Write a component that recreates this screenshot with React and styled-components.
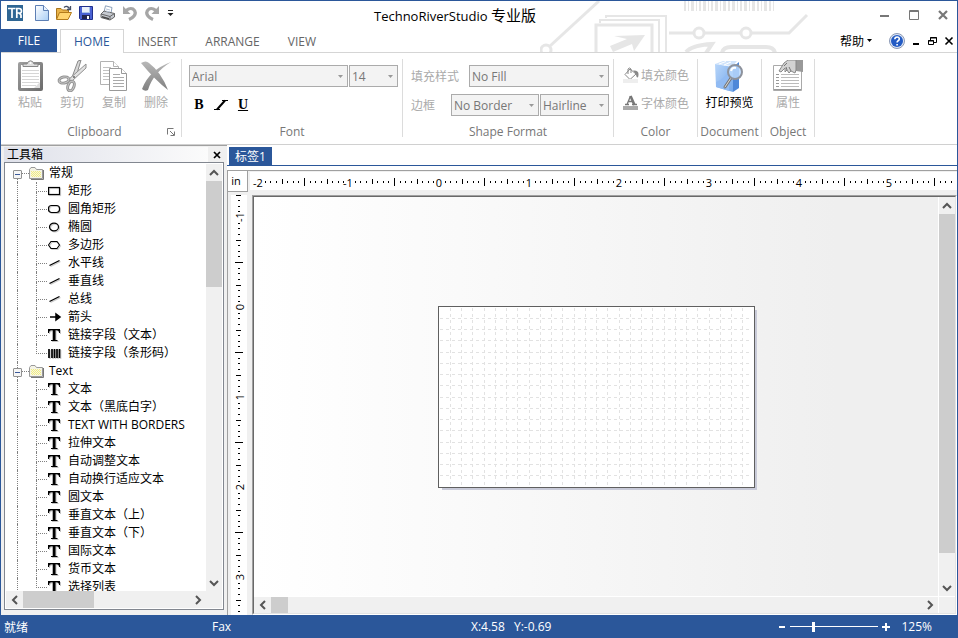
import { useState } from "react"
import styled, { createGlobalStyle } from "styled-components"

const blue = "#2b579a"
const face = "#f0f0f0"

const GlobalStyle = createGlobalStyle`
    * {
        box-sizing: border-box;
    }
    body {
        margin: 0;
    }
    body, button, select, input {
        font-family: "Open Sans", "Noto Sans CJK SC", sans-serif;
        font-size: 12px;
    }
    button {
        padding: 0;
        border: none;
        background: transparent;
        color: inherit;
    }
    svg {
        display: block;
        flex: none;
    }
`

const Window = styled.div`
    height: 100vh;
    display: flex;
    flex-direction: column;
    background-color: white;
    border: 1px solid ${blue};
    border-bottom: none;
    overflow: hidden;
`

/* ---------- header ---------- */

const Header = styled.header`
    position: relative;
    flex: none;
`
const Backdrop = styled.svg`
    position: absolute;
    top: 0;
    right: 147px;
`
const TitleBar = styled.div`
    position: relative;
    height: 28px;
    display: grid;
    grid-template-columns: 174px 1fr 222px;
    align-items: center;
`
const QuickAccess = styled.div`
    display: flex;
    align-items: center;
    gap: 6px;
    padding: 0 0 4px 6px;
`
const QuickButton = styled.button`
    width: ${props => props.$narrow ? "10px" : "16px"};
    height: 16px;
    margin-left: ${props => props.$first ? "5px" : "0"};
`
const Title = styled.h1`
    margin: 0;
    font-size: 13px;
    font-weight: 400;
    line-height: 24px;
    text-align: center;
    color: black;
    white-space: nowrap;
`
const Edition = styled.span`
    font-size: 15px;
`
const Controls = styled.div`
    display: flex;
    justify-content: flex-end;
    gap: 17px;
    padding-right: 8px;
`
const TabRow = styled.nav`
    position: relative;
    height: 24px;
    display: flex;
    border-bottom: 1px solid #d5d5d5;
`
const FileTab = styled.button`
    width: 56px;
    height: 23px;
    margin-right: 3px;
    background-color: ${blue};
    color: white;
`
const Tab = styled.button`
    height: 24px;
    padding: 0 13px;
    border: 1px solid ${props => props.$active ? "#d5d5d5" : "transparent"};
    border-bottom: none;
    background-color: ${props => props.$active ? "white" : "transparent"};
    color: ${props => props.$active ? blue : "#666"};
`
const HelpArea = styled.div`
    margin-left: auto;
    display: flex;
    align-items: center;
    gap: 7px;
    padding-right: 3px;
`
const HelpMenu = styled.button`
    display: flex;
    align-items: center;
    gap: 2px;
    margin-right: 9px;
    color: black;
`

/* ---------- ribbon ---------- */

const Ribbon = styled.div`
    flex: none;
    height: 92px;
    display: flex;
    padding: 6px 0 7px;
    border-bottom: 1px solid #d0d0d0;
`
const Group = styled.section`
    width: ${props => props.$width}px;
    display: flex;
    flex-direction: column;
    justify-content: space-between;
    border-right: 1px solid #dcdcdc;
`
const GroupFooter = styled.div`
    display: flex;
    padding: ${props => props.$launcher ? "0 5px 0 21px" : "0"};
`
const GroupTitle = styled.h2`
    flex: 1;
    margin: 0;
    font-size: 12px;
    font-weight: 400;
    line-height: 10px;
    text-align: center;
    color: #777;
`
const BigRow = styled.div`
    display: flex;
    justify-content: center;
    padding: 1px 0 0;
`
const ClipboardRow = styled(BigRow)`
    justify-content: flex-start;
    padding-left: 8px;
`
const BigButton = styled.button`
    min-width: 42px;
    display: flex;
    flex-direction: column;
    align-items: center;
    line-height: 22px;
    white-space: nowrap;
    color: black;
    &:disabled {
        color: #aaa;
    }
`
const Fields = styled.div`
    display: flex;
    flex-direction: column;
    gap: 7px;
    padding: 6px 4px 0 ${props => props.$indent}px;
`
const FieldRow = styled.div`
    display: flex;
    align-items: center;
    gap: 1px;
    height: 22px;
`
const FieldLabel = styled.label`
    flex: 1;
    color: #aaa;
`
const SelectWrap = styled.span`
    position: relative;
    display: block;
    width: ${props => props.$width}px;
    svg {
        position: absolute;
        right: 4px;
        top: 10px;
    }
`
const Select = styled.select`
    appearance: none;
    display: block;
    width: 100%;
    height: 22px;
    padding: 0 2px;
    border: 1px solid #ababab;
    border-radius: 0;
    background-color: #f3f3f3;
    color: #777;
    opacity: 1;
`
const StyleButtons = styled.div`
    display: flex;
    gap: 2px;
`
const StyleButton = styled.button`
    width: 20px;
    height: 22px;
    display: flex;
    align-items: center;
    justify-content: center;
    font-family: "Liberation Serif", serif;
    font-size: 14px;
    font-weight: 700;
    color: black;
    text-decoration: ${props => props.$underline ? "underline" : "none"};
`
const ColorList = styled.div`
    display: flex;
    flex-direction: column;
    gap: 8px;
    padding: 6px 0 0 9px;
`
const ColorButton = styled.button`
    display: flex;
    align-items: center;
    gap: 2px;
    height: 20px;
    color: #aaa;
    white-space: nowrap;
`

/* ---------- toolbox ---------- */

const Workspace = styled.main`
    flex: 1;
    min-height: 0;
    display: flex;
`
const Dock = styled.aside`
    width: 226px;
    display: flex;
    flex-direction: column;
    padding: 1px 3px 5px;
    border-top: 1px solid #a0a0a0;
    background-color: ${face};
`
const DockHeader = styled.div`
    height: 15px;
    display: flex;
    align-items: center;
    justify-content: space-between;
    padding: 0 3px;
    background: linear-gradient(90deg, #dfe1ea, #fbfbfb 204px, ${face} 204px);
`
const DockTitle = styled.h2`
    margin: 0;
    font-size: 12px;
    font-weight: 400;
    line-height: 15px;
`
const TreeBox = styled.div`
    flex: 1;
    min-height: 0;
    display: grid;
    grid-template-columns: 1fr 16px;
    grid-template-rows: 1fr 17px;
    padding: 1px;
    border: 1px solid #828790;
    background-color: white;
`
const Tree = styled.ul`
    margin: 0;
    padding: 0;
    list-style: none;
    overflow: hidden;
`
const Branch = styled.ul`
    margin: 0;
    padding: 0;
    list-style: none;
`
const TreeRow = styled.div`
    height: 18px;
    display: flex;
    align-items: center;
    white-space: nowrap;
    line-height: 18px;
`
const ToggleCell = styled.span`
    width: 9px;
    height: 18px;
    margin-left: 7px;
    display: flex;
    flex-direction: column;
    align-items: center;
    justify-content: flex-end;
`
const Toggle = styled.button`
    width: 9px;
    height: 9px;
    display: flex;
    align-items: center;
    justify-content: center;
    border: 1px solid #919191;
    border-radius: 1px;
    background-color: #f6f6f6;
`
const Stub = styled.span`
    width: 1px;
    flex: ${props => props.$top ? "1" : "none"};
    height: 3px;
    border-left: 1px dotted ${props => props.$hidden ? "transparent" : "#808080"};
`
const Dots = styled.span`
    width: 7px;
    border-top: 1px dotted #808080;
`
const FolderName = styled.span`
    margin-left: 5px;
`
const Guide = styled.span`
    width: 19px;
    height: 18px;
    margin-left: 11px;
    border-left: 1px dotted #808080;
`
const Elbow = styled.span`
    width: 11px;
    height: 18px;
    margin-right: 1px;
`
const ElbowHalf = styled.span`
    display: block;
    height: ${props => props.$top ? "10px" : "8px"};
    border-left: 1px dotted ${props => props.$hidden ? "transparent" : "#808080"};
    border-bottom: ${props => props.$top ? "1px dotted #808080" : "none"};
`
const ItemName = styled.span`
    margin-left: 6px;
`

/* ---------- scroll bars ---------- */

const VBar = styled.div`
    display: flex;
    flex-direction: column;
    background-color: ${face};
`
const HBar = styled.div`
    display: flex;
    background-color: ${face};
`
const BarButton = styled.button`
    min-width: 16px;
    min-height: 16px;
    flex: 0 0 17px;
    display: flex;
    align-items: center;
    justify-content: center;
`
const BarTrack = styled.div`
    flex: 1;
    display: flex;
    flex-direction: ${props => props.$vertical ? "column" : "row"};
`
const Thumb = styled.div`
    flex: none;
    background-color: #cdcdcd;
`
const BarCorner = styled.div`
    background-color: ${face};
`

/* ---------- document ---------- */

const DocArea = styled.section`
    flex: 1;
    min-width: 0;
    display: flex;
    flex-direction: column;
`
const DocTabs = styled.div`
    height: 21px;
    display: flex;
    align-items: flex-start;
    padding: 2px 0 0 2px;
    border-bottom: 1px solid ${blue};
`
const DocTab = styled.button`
    height: 18px;
    padding: 0 6px;
    background-color: ${blue};
    color: white;
`
const DocFrame = styled.div`
    flex: 1;
    min-height: 0;
    margin-top: 4px;
    display: grid;
    grid-template-columns: 24px 1fr;
    grid-template-rows: 24px 1fr;
    border-top: 1px solid #a0a0a0;
    border-left: 1px solid #a0a0a0;
    background-color: ${face};
`
const Unit = styled.div`
    width: 20px;
    height: 21px;
    padding-right: 3px;
    border-right: 1px solid #a0a0a0;
    border-bottom: 1px solid #a0a0a0;
    background-color: white;
    font-size: 11px;
    line-height: 20px;
    text-align: center;
`
const TopRuler = styled.div`
    height: 18px;
    margin: 1px 0 0 -2px;
    background-color: white;
    overflow: hidden;
`
const SideRuler = styled.div`
    width: 16px;
    min-height: 0;
    margin-left: 3px;
    background-color: white;
    overflow: hidden;
`
const ScaleText = styled.text`
    font-size: 11px;
    text-anchor: middle;
    stroke: white;
    stroke-width: 2px;
    paint-order: stroke;
`
const Sunken = styled.div`
    min-width: 0;
    min-height: 0;
    border: 1px solid;
    border-color: #a0a0a0 white white #a0a0a0;
`
const View = styled.div`
    height: 100%;
    display: grid;
    grid-template-columns: 1fr 16px;
    grid-template-rows: 1fr 16px;
    gap: 1px;
    border: 1px solid;
    border-color: #696969 #e3e3e3 #e3e3e3 #696969;
    background-color: white;
`
const Canvas = styled.div`
    padding: 109px 0 0 184px;
    background: linear-gradient(90deg, white, #fafafa 30%, #efefef 85%);
    overflow: hidden;
`
const Sheet = styled.div`
    width: 317px;
    height: 182px;
    border: 1px solid #5f5f5f;
    background-color: white;
    box-shadow: 3px 3px 0 -1px #c8cad8;
`

/* ---------- status bar ---------- */

const StatusBar = styled.footer`
    flex: none;
    height: 23px;
    margin: 0 -1px;
    display: flex;
    align-items: center;
    padding: 0 26px 0 4px;
    background-color: ${blue};
    color: white;
    white-space: nowrap;
`
const StatusText = styled.span`
    width: ${props => props.$width}px;
`
const ZoomBox = styled.div`
    margin-left: auto;
    display: flex;
    align-items: center;
    gap: 4px;
`
const ZoomRange = styled.input`
    appearance: none;
    width: 88px;
    height: 12px;
    margin: 0;
    background: linear-gradient(white, white) center / 100% 1px no-repeat;
    &::-webkit-slider-thumb {
        appearance: none;
        width: 3px;
        height: 10px;
        background-color: white;
    }
`
const ZoomValue = styled.output`
    margin-left: 7px;
`

/* ---------- drawings ---------- */

const barWidths = [2, 1, 3, 1, 2, 4, 1, 2, 3, 1, 3, 2, 4, 1, 2, 3, 1, 3, 2, 1, 3, 2, 1, 2, 3, 2]

const HeaderArt = () => {
    let x = 144
    return (
        <Backdrop width="270" height="51" viewBox="0 0 270 51" fill="none" stroke="#e6e6e6" strokeWidth="3" aria-hidden="true">
            <circle cx="6" cy="49" r="5" />
            <path d="M10 45 59 0" />
            <path d="M56 52V24H112V52" />
            <path d="M60 22V19H119V52" strokeWidth="2" />
            <path d="M66 17V15H126V52" strokeWidth="2" />
            <path d="M70 45 87 38 74 35 105 34 94 50 92 43 73 51Z" fill="#e6e6e6" stroke="none" />
            <path d="M129 32H153M165 32H200M212 32H249L267 14" />
            <circle cx="159" cy="32" r="5" />
            <circle cx="206" cy="32" r="5" />
            <path d="M146 51Q152 44 172 43L166 52M182 52Q183 46 191 46H226Q234 46 235 52" strokeWidth="4" />
            {barWidths.map((w, i) => {
                const bar = <rect key={i} x={x} y="0" width={w > 2 ? 3 : w} height="10" fill="#e6e6e6" stroke="none" />
                x += w > 2 ? 5 : w + 2
                return x < 238 ? bar : null
            })}
        </Backdrop>
    )
}

const Logo = () => (
    <svg width="16" height="16" viewBox="0 0 16 16">
        <rect width="16" height="16" fill="#2f6694" />
        <path d="M1 3.500H8.500M5 3.500V13M9.800 13V3.500H12Q14.500 3.500 14.500 6T12 8H10M12 8L14 10V13" fill="none" stroke="white" strokeWidth="1.700" />
    </svg>
)
const NewIcon = () => (
    <svg width="16" height="16" viewBox="0 0 16 16">
        <defs>
            <linearGradient id="paper" x2="1" y2="1">
                <stop stopColor="#fff" />
                <stop offset="1" stopColor="#a9cef5" />
            </linearGradient>
        </defs>
        <path d="M1.500 .5H9.500L14.500 5.500V15.500H1.500Z" fill="url(#paper)" stroke="#5d7fb4" />
        <path d="M9.500 .5V5.500H14.500" fill="#e8f3ff" stroke="#5d7fb4" />
    </svg>
)
const OpenIcon = () => (
    <svg width="16" height="16" viewBox="0 0 16 16">
        <path d="M.5 14V3.500H5L6.500 5H12.500V9" fill="#e9b44a" stroke="#a8741c" />
        <path d="M.5 14.500 3.500 7.500H15.500L12 14.500Z" fill="#ffd570" stroke="#b37b1b" />
        <path d="M8 2.500Q11 0 13.500 3.500M14.500 1V4.500H11" fill="none" stroke="#444f66" strokeWidth="1.300" />
    </svg>
)
const SaveIcon = () => (
    <svg width="16" height="16" viewBox="0 0 16 16">
        <path d="M1.500 1.500H14.500V14.500H2.500L1.500 13.500Z" fill="#4a62d3" stroke="#20308c" />
        <rect x="4" y="2" width="8" height="6" fill="#e9f0fb" />
        <path d="M11 2H12V8H4V7H11Z" fill="#a9c2ea" />
        <rect x="4" y="10" width="8" height="4" fill="#22264f" />
        <rect x="9" y="11" width="2" height="3" fill="#fff" />
    </svg>
)
const PrintIcon = () => (
    <svg width="16" height="16" viewBox="0 0 16 16">
        <path d="M4 7 5.500.8 12 2.500 11 8" fill="#fff" stroke="#8ba0ba" />
        <path d="M1 9 4 6 14.500 8.500V12L10 15 1 12.500Z" fill="#c6cad1" stroke="#666" />
        <path d="M1 9 10 11.500 14.500 8.500M10 11.500V15" fill="none" stroke="#666" />
        <path d="M2 11 9 13V14.500L2 12.500Z" fill="#444" />
        <path d="M6 4 10 5M6 6 10 7" stroke="#b7c6da" />
    </svg>
)
const UndoIcon = ({ redo }) => (
    <svg width="16" height="16" viewBox="0 0 16 16">
        <g transform={redo ? "translate(16 0) scale(-1 1)" : undefined} fill="none">
            <path d="M4 5.500Q8 2.500 11 4 15 7 12 11 10.500 13 7 14.500" stroke="#a6a6a6" strokeWidth="3.200" />
            <path d="M1 1V9H8.500Z" fill="#a6a6a6" />
        </g>
    </svg>
)
const MoreIcon = () => (
    <svg width="10" height="16" viewBox="0 0 10 16">
        <path d="M2 5.500H7" stroke="#222" />
        <path d="M1.500 8H7.500L4.500 11Z" fill="#222" />
    </svg>
)
const MinimizeIcon = () => (
    <svg width="12" height="12" viewBox="0 0 12 12"><path d="M1 7H10" stroke="#777" strokeWidth="2" /></svg>
)
const MaximizeIcon = () => (
    <svg width="12" height="12" viewBox="0 0 12 12" fill="none" stroke="#777">
        <path d="M1.500 1.500H10.500V10.500H1.500Z" />
        <path d="M1 2.500H11" />
    </svg>
)
const CloseIcon = () => (
    <svg width="12" height="12" viewBox="0 0 12 12"><path d="M2 2 10 10M10 2 2 10" stroke="#777" strokeWidth="2.200" /></svg>
)
const CaretIcon = ({ color }) => (
    <svg width="7" height="4" viewBox="0 0 7 4"><path d="M1 0H6L3.500 3Z" fill={color} /></svg>
)
const HelpIcon = () => (
    <svg width="16" height="16" viewBox="0 0 16 16">
        <circle cx="8" cy="8" r="7.500" fill="#dfe7f5" stroke="#8b99b5" />
        <circle cx="8" cy="8" r="6" fill="#235bc4" />
        <path d="M5.800 6.300Q5.900 4 8.100 4T10.300 6.100Q10.300 7.200 8.900 8 8.100 8.500 8.100 9.500M8.100 11V12.500" fill="none" stroke="#fff" strokeWidth="1.600" />
    </svg>
)
const ChildMinIcon = () => (
    <svg width="9" height="10" viewBox="0 0 9 10"><path d="M1 8H7" stroke="black" strokeWidth="2" /></svg>
)
const ChildRestoreIcon = () => (
    <svg width="9" height="10" viewBox="0 0 9 10" fill="none" stroke="black">
        <path d="M2.500 4V1.500H8.500V6.500H6M2 2H9" />
        <path d="M.5 4.500H5.500V8.500H.5ZM0 5H6" />
    </svg>
)
const ChildCloseIcon = () => (
    <svg width="10" height="10" viewBox="0 0 10 10"><path d="M1.500 1.500 8.500 8.500M8.500 1.500 1.500 8.500" stroke="black" strokeWidth="1.600" /></svg>
)

const PasteIcon = () => (
    <svg width="32" height="32" viewBox="0 0 32 32">
        <defs>
            <linearGradient id="board" x2="1" y2="1">
                <stop stopColor="#a0a0a0" />
                <stop offset="1" stopColor="#6a6a6a" />
            </linearGradient>
        </defs>
        <rect x="4" y="2" width="25" height="29" rx="2" fill="url(#board)" />
        <rect x="7" y="5" width="19" height="23" fill="#fff" />
        <path d="M26 22V28H20Z" fill="#ddd" />
        <path d="M8 10.500H25M8 13.500H25M8 16.500H25M8 19.500H25M8 22.500H25M8 25.500H22" stroke="#d6d6d6" />
        <path d="M9 6.500V4H13Q14 .8 16.500 .8T20 4H24V6.500Z" fill="#dedede" stroke="#888" />
        <circle cx="16.500" cy="3" r="1" fill="#fff" />
    </svg>
)
const CutIcon = () => (
    <svg width="32" height="32" viewBox="0 0 32 32" fill="none">
        <path d="M22 1 25 0 20 17 15 20Z" fill="#d9d9d9" stroke="#8a8a8a" />
        <path d="M30 4 30 8 16 21 12 20Z" fill="#e2e2e2" stroke="#909090" />
        <ellipse cx="8" cy="20" rx="5" ry="3" transform="rotate(-12 8 20)" stroke="#929292" strokeWidth="3" />
        <ellipse cx="15" cy="26" rx="3" ry="5" transform="rotate(20 15 26)" stroke="#929292" strokeWidth="3" />
        <ellipse cx="8" cy="20" rx="5" ry="3" transform="rotate(-12 8 20)" stroke="#c9c9c9" />
        <ellipse cx="15" cy="26" rx="3" ry="5" transform="rotate(20 15 26)" stroke="#c9c9c9" />
        <circle cx="18" cy="17" r="1" fill="#666" />
    </svg>
)
const CopyIcon = () => (
    <svg width="32" height="32" viewBox="0 0 32 32" fill="#fff" stroke="#b2b2b2">
        <path d="M2.500 1.500H15.500L20.500 6.500V24.500H2.500Z" />
        <path d="M15.500 1.500V6.500H20.500" />
        <path d="M5 7.500H13M5 10.500H17M5 13.500H12M5 16.500H12M5 19.500H12" stroke="#c2c2c2" />
        <path d="M11.500 8.500H23.500L28.500 13.500V30.500H11.500Z" stroke="#999" />
        <path d="M23.500 8.500V13.500H28.500" stroke="#999" />
        <path d="M15 14.500H22M15 17.500H26M15 20.500H26M15 23.500H26M15 26.500H26" stroke="#aaa" />
    </svg>
)
const DeleteIcon = () => (
    <svg width="32" height="32" viewBox="0 0 32 32">
        <defs>
            <linearGradient id="cross" x2="0" y2="1">
                <stop stopColor="#b8b8b8" />
                <stop offset="1" stopColor="#808080" />
            </linearGradient>
        </defs>
        <path d="M1 3Q6 0 9 3 21 12 28 30 15 20 1 3Z" fill="url(#cross)" />
        <path d="M31 2Q13 13 8 30 5 32 2 29 9 10 31 2Z" fill="url(#cross)" />
    </svg>
)
const PreviewIcon = () => (
    <svg width="32" height="32" viewBox="0 0 32 32">
        <defs>
            <linearGradient id="box" x2="1" y2="1">
                <stop stopColor="#b8d6fa" />
                <stop offset="1" stopColor="#72a6ea" />
            </linearGradient>
        </defs>
        <path d="M2 4 10 1H24L20 6Z" fill="#cfe3fb" />
        <path d="M2 4 20 7V32L3 27Z" fill="url(#box)" />
        <path d="M20 7 26 2V28L20 32Z" fill="#4f88d8" />
        <path d="M6 4 13 1.500M11 5 18 2" stroke="#fff" />
        <path d="M3 22Q12 19 16 9V31L3 27Z" fill="#91bbf3" />
        <path d="M18 18 12 27" stroke="#777" strokeWidth="3" strokeLinecap="round" />
        <path d="M18 18 12 27" stroke="#ddd" strokeLinecap="round" />
        <circle cx="22" cy="12" r="7" fill="#b9d8fd" fillOpacity=".85" stroke="#8d929c" strokeWidth="2" />
        <path d="M18 11Q19 7 23 8" fill="none" stroke="#fff" strokeWidth="2" />
    </svg>
)
const PropertyIcon = () => (
    <svg width="32" height="32" viewBox="0 0 32 32">
        <path d="M1.500 5.500H29.500V30.500H1.500Z" fill="#fff" stroke="#aaa" />
        <path d="M2 29.500H29" stroke="#999" />
        <path d="M4 14.500H7M4 17.500H7M4 20.500H7M4 23.500H7M4 26.500H7" stroke="#999" />
        <path d="M9 14.500H27M9 17.500H27M9 20.500H27M9 23.500H27M9 26.500H27" stroke="#bbb" />
        <path d="M23 0H31V12L24 11Z" fill="#999" />
        <path d="M7 11 12 3 16 0H24V10L23 13 19 11 17 13 15 10 13 12 13 8 9 12Z" fill="#d2d2d2" stroke="#888" />
        <path d="M12 6 15 3M15 10 14 7M19 11 17 7" stroke="#777" />
    </svg>
)
const FillColorIcon = () => (
    <svg width="16" height="16" viewBox="0 0 16 16">
        <path d="M7 2 13 7 7 12.500 2 7.500Z" fill="#fff" stroke="#888" />
        <path d="M5 7V2Q6.500 0 8 2V6" fill="none" stroke="#888" />
        <path d="M10 3.500Q15.500 3 15.500 7T14 10.500Q13 9 13 7Z" fill="#888" />
        <rect y="12" width="15" height="4" fill="#eee" />
    </svg>
)
const FontColorIcon = () => (
    <svg width="16" height="16" viewBox="0 0 16 16">
        <path d="M4 9.500 7.500 1M5 6.500H10M2 9.500H6M9 9.500H14" fill="none" stroke="#777" strokeWidth="1.300" />
        <path d="M7.500 1 11.500 10" stroke="#777" strokeWidth="2.600" />
        <rect y="11" width="15" height="4" fill="#aaa" />
    </svg>
)
const ItalicIcon = () => (
    <svg width="14" height="12" viewBox="0 0 14 12" fill="none" stroke="black">
        <path d="M8 1.500H14M0 10.500H6" />
        <path d="M11 1.500 3 10.500" strokeWidth="2" />
    </svg>
)
const LauncherIcon = () => (
    <svg width="9" height="9" viewBox="0 0 9 9" fill="none" stroke="#777">
        <path d="M.5 6.500V.5H6.500" />
        <path d="M3 3 7 7M7.500 3.500V7.500H3.500" />
    </svg>
)

const FolderIcon = () => (
    <svg width="15" height="13" viewBox="0 0 15 13">
        <path d="M2 12.500H14.500V3" fill="none" stroke="#777" />
        <path d="M.5 11.500V2.500L2 .5H6L7.500 2.500H13.500V11.500Z" fill="#f4f3e6" stroke="#999" />
        <path d="M2 4.500H12M2 6.500H12M2 8.500H12" stroke="#f3ee7c" strokeDasharray="1 1" />
        <path d="M3 5.500H12M3 7.500H12M3 9.500H12" stroke="#f3ee7c" strokeDasharray="1 1" />
    </svg>
)
const line = <path d="M1.500 9.500 11.500 4.500" strokeWidth="1.300" />
const shapes = {
    rect: <rect x=".5" y="3.500" width="11" height="7" strokeWidth="1.200" />,
    round: <rect x=".5" y="3.500" width="11" height="7" rx="3" strokeWidth="1.200" />,
    ellipse: <ellipse cx="6" cy="7" rx="4.500" ry="3.800" strokeWidth="1.200" />,
    polygon: <path d="M.5 7 3 3.500H9L11.500 7 9 10.500H3Z" strokeWidth="1.100" />,
    line,
    arrow: <path d="M2 7H9M8 4V10L12 7Z" fill="black" strokeWidth="1.500" />,
    bars: <path d="M1 3V12M4 3V12M6.500 3V12M9 3V12M11.500 3V12" strokeWidth="1.700" />,
    text: <path d="M0 1H12V5H11Q11 2.200 8.500 2.200H7.500V12H9.500V13H3V12H4.700V2.200H3.500Q1 2.200 1 5H0Z" />,
}
const ShapeIcon = ({ kind }) => (
    <svg width="14" height="14" viewBox="0 0 14 14" fill="none">
        {kind === "text" ? (
            <>
                <g transform="translate(1 1)" fill="#c4c4c4">{shapes.text}</g>
                <g fill="black">{shapes.text}</g>
            </>
        ) : (
            <>
                <g transform="translate(1 1)" stroke="#ccc">{kind !== "arrow" && shapes[kind]}</g>
                <g stroke="black">{shapes[kind]}</g>
            </>
        )}
    </svg>
)
const chevrons = {
    up: "M2 8 6 4 10 8",
    down: "M2 4 6 8 10 4",
    left: "M8 2 4 6 8 10",
    right: "M4 2 8 6 4 10",
}
const Chevron = ({ to }) => (
    <svg width="12" height="12" viewBox="0 0 12 12"><path d={chevrons[to]} fill="none" stroke="#555" strokeWidth="2" /></svg>
)

/* ---------- rulers: 90px to the inch, 16 parts each ---------- */

const tickSize = (n) => {
    if (n % 16 === 0) return 0
    if (n % 8 === 0) return 8
    return n % 4 === 0 ? 5 : 2
}
const ticks = (from, to) => Array.from({ length: to - from + 1 }, (_, i) => from + i)

const HorizontalScale = () => (
    <svg width="100%" height="18">
        {ticks(-31, 92).map((n) => (
            <rect key={n} x={Math.round(189 + n * 5.625)} y={10 - Math.round(tickSize(n) / 2)} width="1" height={tickSize(n)} />
        ))}
        {[-2, -1, 0, 1, 2, 3, 4, 5].map((n) => (
            <ScaleText key={n} x={(n < 0 ? 187 : 188) + n * 90 + 1} y="15">{n}</ScaleText>
        ))}
    </svg>
)
const VerticalScale = () => (
    <svg width="16" height="100%">
        {ticks(-20, 90).map((n) => (
            <rect key={n} x={8 - Math.round(tickSize(n) / 2)} y={Math.round(112 + n * 5.625)} width={tickSize(n)} height="1" />
        ))}
        {[-1, 0, 1, 2, 3].map((n) => (
            <ScaleText key={n} transform={`translate(13 ${112 + n * 90}) rotate(-90)`}>{n}</ScaleText>
        ))}
    </svg>
)
const SheetGrid = () => (
    <svg width="315" height="180" fill="none" stroke="#e2e2e2" strokeDasharray="3 3">
        {ticks(1, 27).map((n) => (
            <path key={n} d={`M${Math.floor(n * 11.25) + 0.5} 1V178`} />
        ))}
        {ticks(1, 15).map((n) => (
            <path key={n} d={`M1 ${Math.floor(n * 11.25) + 0.5}H310`} />
        ))}
    </svg>
)

/* ---------- data ---------- */

const toolbox = [
    {
        name: "常规",
        items: [
            ["rect", "矩形"],
            ["round", "圆角矩形"],
            ["ellipse", "椭圆"],
            ["polygon", "多边形"],
            ["line", "水平线"],
            ["line", "垂直线"],
            ["line", "总线"],
            ["arrow", "箭头"],
            ["text", "链接字段（文本）"],
            ["bars", "链接字段（条形码）"],
        ],
    },
    {
        name: "Text",
        items: [
            ["text", "文本"],
            ["text", "文本（黑底白字）"],
            ["text", "TEXT WITH BORDERS"],
            ["text", "拉伸文本"],
            ["text", "自动调整文本"],
            ["text", "自动换行适应文本"],
            ["text", "圆文本"],
            ["text", "垂直文本（上）"],
            ["text", "垂直文本（下）"],
            ["text", "国际文本"],
            ["text", "货币文本"],
            ["text", "选择列表"],
        ],
    },
]

const clipboard = [
    ["粘贴", PasteIcon],
    ["剪切", CutIcon],
    ["复制", CopyIcon],
    ["删除", DeleteIcon],
]

const Combo = ({ id, label, width, value }) => (
    <SelectWrap $width={width}>
        <Select id={id} aria-label={label} disabled defaultValue={value}>
            <option>{value}</option>
        </Select>
        <CaretIcon color="#999" />
    </SelectWrap>
)

const VScroll = ({ size }) => (
    <VBar>
        <BarButton aria-label="Scroll up"><Chevron to="up" /></BarButton>
        <BarTrack $vertical><Thumb style={{ height: size }} /></BarTrack>
        <BarButton aria-label="Scroll down"><Chevron to="down" /></BarButton>
    </VBar>
)
const HScroll = ({ size }) => (
    <HBar>
        <BarButton aria-label="Scroll left"><Chevron to="left" /></BarButton>
        <BarTrack><Thumb style={{ width: size }} /></BarTrack>
        <BarButton aria-label="Scroll right"><Chevron to="right" /></BarButton>
    </HBar>
)

const App = () => {
    const [tab, setTab] = useState("HOME")
    const [closed, setClosed] = useState([])
    const [zoom, setZoom] = useState(125)

    const toggle = (name) => {
        setClosed(closed.includes(name) ? closed.filter((n) => n !== name) : [...closed, name])
    }

    return (
        <Window>
            <GlobalStyle />
            <Header>
                <HeaderArt />
                <TitleBar>
                    <QuickAccess>
                        <Logo />
                        <QuickButton $first aria-label="New"><NewIcon /></QuickButton>
                        <QuickButton aria-label="Open"><OpenIcon /></QuickButton>
                        <QuickButton aria-label="Save"><SaveIcon /></QuickButton>
                        <QuickButton aria-label="Print"><PrintIcon /></QuickButton>
                        <QuickButton aria-label="Undo"><UndoIcon /></QuickButton>
                        <QuickButton aria-label="Redo"><UndoIcon redo /></QuickButton>
                        <QuickButton $narrow aria-label="More"><MoreIcon /></QuickButton>
                    </QuickAccess>
                    <Title>TechnoRiverStudio <Edition>专业版</Edition></Title>
                    <Controls>
                        <button aria-label="Minimize"><MinimizeIcon /></button>
                        <button aria-label="Maximize"><MaximizeIcon /></button>
                        <button aria-label="Close"><CloseIcon /></button>
                    </Controls>
                </TitleBar>
                <TabRow>
                    <FileTab>FILE</FileTab>
                    {["HOME", "INSERT", "ARRANGE", "VIEW"].map((name) => (
                        <Tab key={name} $active={name === tab} onClick={() => setTab(name)}>{name}</Tab>
                    ))}
                    <HelpArea>
                        <HelpMenu>帮助 <CaretIcon color="black" /></HelpMenu>
                        <button aria-label="Help"><HelpIcon /></button>
                        <button aria-label="Minimize label"><ChildMinIcon /></button>
                        <button aria-label="Restore label"><ChildRestoreIcon /></button>
                        <button aria-label="Close label"><ChildCloseIcon /></button>
                    </HelpArea>
                </TabRow>
            </Header>

            <Ribbon>
                <Group $width={181}>
                    <ClipboardRow>
                        {clipboard.map(([name, Icon]) => (
                            <BigButton key={name} disabled><Icon />{name}</BigButton>
                        ))}
                    </ClipboardRow>
                    <GroupFooter $launcher>
                        <GroupTitle>Clipboard</GroupTitle>
                        <button aria-label="Clipboard options"><LauncherIcon /></button>
                    </GroupFooter>
                </Group>
                <Group $width={221}>
                    <Fields $indent={7}>
                        <FieldRow>
                            <Combo label="Font name" width={159} value="Arial" />
                            <Combo label="Font size" width={49} value="14" />
                        </FieldRow>
                        <StyleButtons>
                            <StyleButton>B</StyleButton>
                            <StyleButton aria-label="Italic"><ItalicIcon /></StyleButton>
                            <StyleButton $underline>U</StyleButton>
                        </StyleButtons>
                    </Fields>
                    <GroupFooter><GroupTitle>Font</GroupTitle></GroupFooter>
                </Group>
                <Group $width={211}>
                    <Fields $indent={8}>
                        <FieldRow>
                            <FieldLabel htmlFor="fill">填充样式</FieldLabel>
                            <Combo id="fill" width={140} value="No Fill" />
                        </FieldRow>
                        <FieldRow>
                            <FieldLabel htmlFor="border">边框</FieldLabel>
                            <Combo id="border" width={88} value="No Border" />
                            <Combo label="Border width" width={69} value="Hairline" />
                        </FieldRow>
                    </Fields>
                    <GroupFooter><GroupTitle>Shape Format</GroupTitle></GroupFooter>
                </Group>
                <Group $width={84}>
                    <ColorList>
                        <ColorButton disabled><FillColorIcon />填充颜色</ColorButton>
                        <ColorButton disabled><FontColorIcon />字体颜色</ColorButton>
                    </ColorList>
                    <GroupFooter><GroupTitle>Color</GroupTitle></GroupFooter>
                </Group>
                <Group $width={64}>
                    <BigRow><BigButton><PreviewIcon />打印预览</BigButton></BigRow>
                    <GroupFooter><GroupTitle>Document</GroupTitle></GroupFooter>
                </Group>
                <Group $width={53}>
                    <BigRow><BigButton disabled><PropertyIcon />属性</BigButton></BigRow>
                    <GroupFooter><GroupTitle>Object</GroupTitle></GroupFooter>
                </Group>
            </Ribbon>

            <Workspace>
                <Dock>
                    <DockHeader>
                        <DockTitle>工具箱</DockTitle>
                        <button aria-label="Close toolbox">
                            <svg width="8" height="8" viewBox="0 0 8 8"><path d="M1 1 7 7M7 1 1 7" stroke="black" strokeWidth="1.700" /></svg>
                        </button>
                    </DockHeader>
                    <TreeBox>
                        <Tree>
                            {toolbox.map((folder, f) => (
                                <li key={folder.name}>
                                    <TreeRow>
                                        <ToggleCell>
                                            <Stub $top $hidden={f === 0} />
                                            <Toggle aria-label={folder.name} onClick={() => toggle(folder.name)}>
                                                <svg width="5" height="1"><rect width="5" height="1" fill="#3c5a9a" /></svg>
                                            </Toggle>
                                            <Stub />
                                        </ToggleCell>
                                        <Dots />
                                        <FolderIcon />
                                        <FolderName>{folder.name}</FolderName>
                                    </TreeRow>
                                    {!closed.includes(folder.name) && (
                                        <Branch>
                                            {folder.items.map(([kind, name], i) => (
                                                <li key={name}>
                                                    <TreeRow>
                                                        <Guide />
                                                        <Elbow>
                                                            <ElbowHalf $top />
                                                            <ElbowHalf $hidden={i === folder.items.length - 1} />
                                                        </Elbow>
                                                        <ShapeIcon kind={kind} />
                                                        <ItemName>{name}</ItemName>
                                                    </TreeRow>
                                                </li>
                                            ))}
                                        </Branch>
                                    )}
                                </li>
                            ))}
                        </Tree>
                        <VScroll size="27%" />
                        <HScroll size="43%" />
                        <BarCorner />
                    </TreeBox>
                </Dock>

                <DocArea>
                    <DocTabs><DocTab>标签1</DocTab></DocTabs>
                    <DocFrame>
                        <Unit>in</Unit>
                        <TopRuler><HorizontalScale /></TopRuler>
                        <SideRuler><VerticalScale /></SideRuler>
                        <Sunken>
                            <View>
                                <Canvas>
                                    <Sheet><SheetGrid /></Sheet>
                                </Canvas>
                                <VScroll size="93%" />
                                <HScroll size="17px" />
                                <BarCorner />
                            </View>
                        </Sunken>
                    </DocFrame>
                </DocArea>
            </Workspace>

            <StatusBar>
                <StatusText $width={208}>就绪</StatusText>
                <StatusText $width={259}>Fax</StatusText>
                <StatusText $width={43}>X:4.58</StatusText>
                <StatusText>Y:-0.69</StatusText>
                <ZoomBox>
                    <button aria-label="Zoom out" onClick={() => setZoom(Math.max(25, zoom - 25))}>
                        <svg width="8" height="8" viewBox="0 0 8 8"><path d="M1 4H7" stroke="white" strokeWidth="2" /></svg>
                    </button>
                    <ZoomRange type="range" aria-label="Zoom" min="25" max="425" value={zoom} onChange={(e) => setZoom(Number(e.target.value))} />
                    <button aria-label="Zoom in" onClick={() => setZoom(Math.min(425, zoom + 25))}>
                        <svg width="8" height="8" viewBox="0 0 8 8"><path d="M0 4H8M4 0V8" stroke="white" strokeWidth="2" /></svg>
                    </button>
                    <ZoomValue>{zoom}%</ZoomValue>
                </ZoomBox>
            </StatusBar>
        </Window>
    )
}

export default App
